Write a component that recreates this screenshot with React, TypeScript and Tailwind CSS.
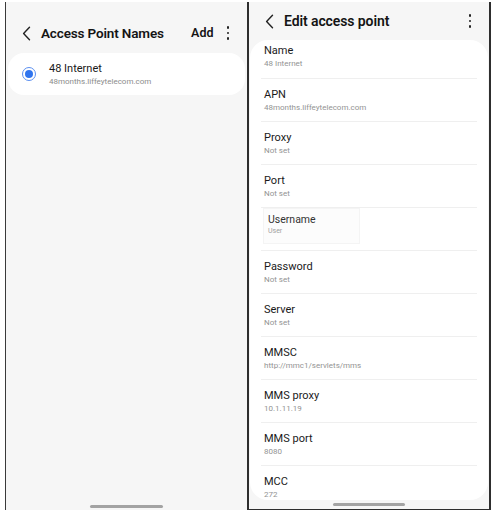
import React from "react";

const Chevron = () => (
  <svg width="9" height="15" viewBox="0 0 9 15" fill="none">
    <path d="M7.5 1.2L1.6 7.5l5.9 6.3" stroke="#222" strokeWidth="1.4" strokeLinecap="round" strokeLinejoin="round" />
  </svg>
);

const Dots = () => (
  <div className="flex flex-col items-center gap-[3px]">
    <div className="w-[2.5px] h-[2.5px] rounded-full bg-[#222]" />
    <div className="w-[2.5px] h-[2.5px] rounded-full bg-[#222]" />
    <div className="w-[2.5px] h-[2.5px] rounded-full bg-[#222]" />
  </div>
);

const rows: [string, string][] = [
  ["Name", "48 Internet"],
  ["APN", "48months.liffeytelecom.com"],
  ["Proxy", "Not set"],
  ["Port", "Not set"],
  ["Username", "User"],
  ["Password", "Not set"],
  ["Server", "Not set"],
  ["MMSC", "http://mmc1/servlets/mms"],
  ["MMS proxy", "10.1.11.19"],
  ["MMS port", "8080"],
  ["MCC", "272"],
];

export default function App() {
  return (
    <div
      className="w-[493px] h-[515px] bg-white flex pt-[2px] pl-[5px]"
      style={{ fontFamily: "Roboto, 'Noto Sans', sans-serif" }}
    >
      {/* Left panel */}
      <div className="w-[242px] h-[508px] border-l border-[#3a3a3a] bg-[#f6f6f6] flex flex-col">
        <div className="h-[18px]" />
        <div className="h-[26px] flex items-center pl-[16px] pr-[18px]">
          <Chevron />
          <div className="ml-[10px] text-[13.5px] font-semibold text-[#141414] tracking-[-0.15px]">
            Access Point Names
          </div>
          <div className="flex-1" />
          <div className="text-[12.5px] font-semibold text-[#141414]">Add</div>
          <div className="ml-[13px]">
            <Dots />
          </div>
        </div>
        <div className="h-[7px]" />
        <div className="mx-[2px] h-[42px] rounded-[16px] bg-white flex items-center pl-[14px]">
          <div className="w-[14px] h-[14px] rounded-full border-[1.5px] border-[#5b8ff0] flex items-center justify-center">
            <div className="w-[8px] h-[8px] rounded-full bg-[#2f74ee]" />
          </div>
          <div className="ml-[13px] flex flex-col">
            <div className="text-[11px] leading-[14px] text-[#1a1a1a]">48 Internet</div>
            <div className="text-[8px] leading-[11px] text-[#8c8c8c]">48months.liffeytelecom.com</div>
          </div>
        </div>
        <div className="flex-1" />
        <div className="mx-auto w-[73px] h-[3px] rounded-full bg-[#a3a3a3] mb-[2px]" />
      </div>

      {/* Right panel */}
      <div className="w-[244px] h-[508px] border-l-2 border-r-2 border-b border-[#2e2e2e] bg-[#f6f6f6] flex flex-col">
        <div className="h-[38px] shrink-0 flex items-center pl-[16px] pr-[18px]">
          <Chevron />
          <div className="ml-[10px] text-[14px] font-semibold text-[#141414] tracking-[-0.1px]">
            Edit access point
          </div>
          <div className="flex-1" />
          <Dots />
        </div>
        <div className="mx-[1px] h-[460px] shrink-0 rounded-[18px] bg-white overflow-hidden flex flex-col">
          {rows.map(([t, s], i) => (
            <React.Fragment key={t}>
              {i > 0 && <div className="mx-[11px] h-px bg-[#efefef] shrink-0" />}
              {t === "Username" ? (
                <div className="shrink-0 h-[42px] pl-[13px] flex items-start">
                  <div className="w-[97px] h-[36px] border border-[#f4f4f4] bg-[#fcfcfc] flex flex-col pt-[4px] pl-[4px]">
                    <div className="text-[10.5px] leading-[13px] text-[#333]">Username</div>
                    <div className="text-[7px] leading-[10px] text-[#a0a0a0]">User</div>
                  </div>
                </div>
              ) : (
                <div
                  className={
                    "shrink-0 px-[14px] flex flex-col " +
                    (i === 0 ? "pt-[4px] h-[38px]" : "pt-[9px] h-[42px]")
                  }
                >
                  <div className="text-[11px] leading-[14px] text-[#1a1a1a]">{t}</div>
                  <div className="text-[8px] leading-[12px] text-[#939393]">{s}</div>
                </div>
              )}
            </React.Fragment>
          ))}
        </div>
        <div className="h-[3px]" />
        <div className="mx-auto w-[72px] h-[3px] rounded-full bg-[#a3a3a3]" />
      </div>
    </div>
  );
}
